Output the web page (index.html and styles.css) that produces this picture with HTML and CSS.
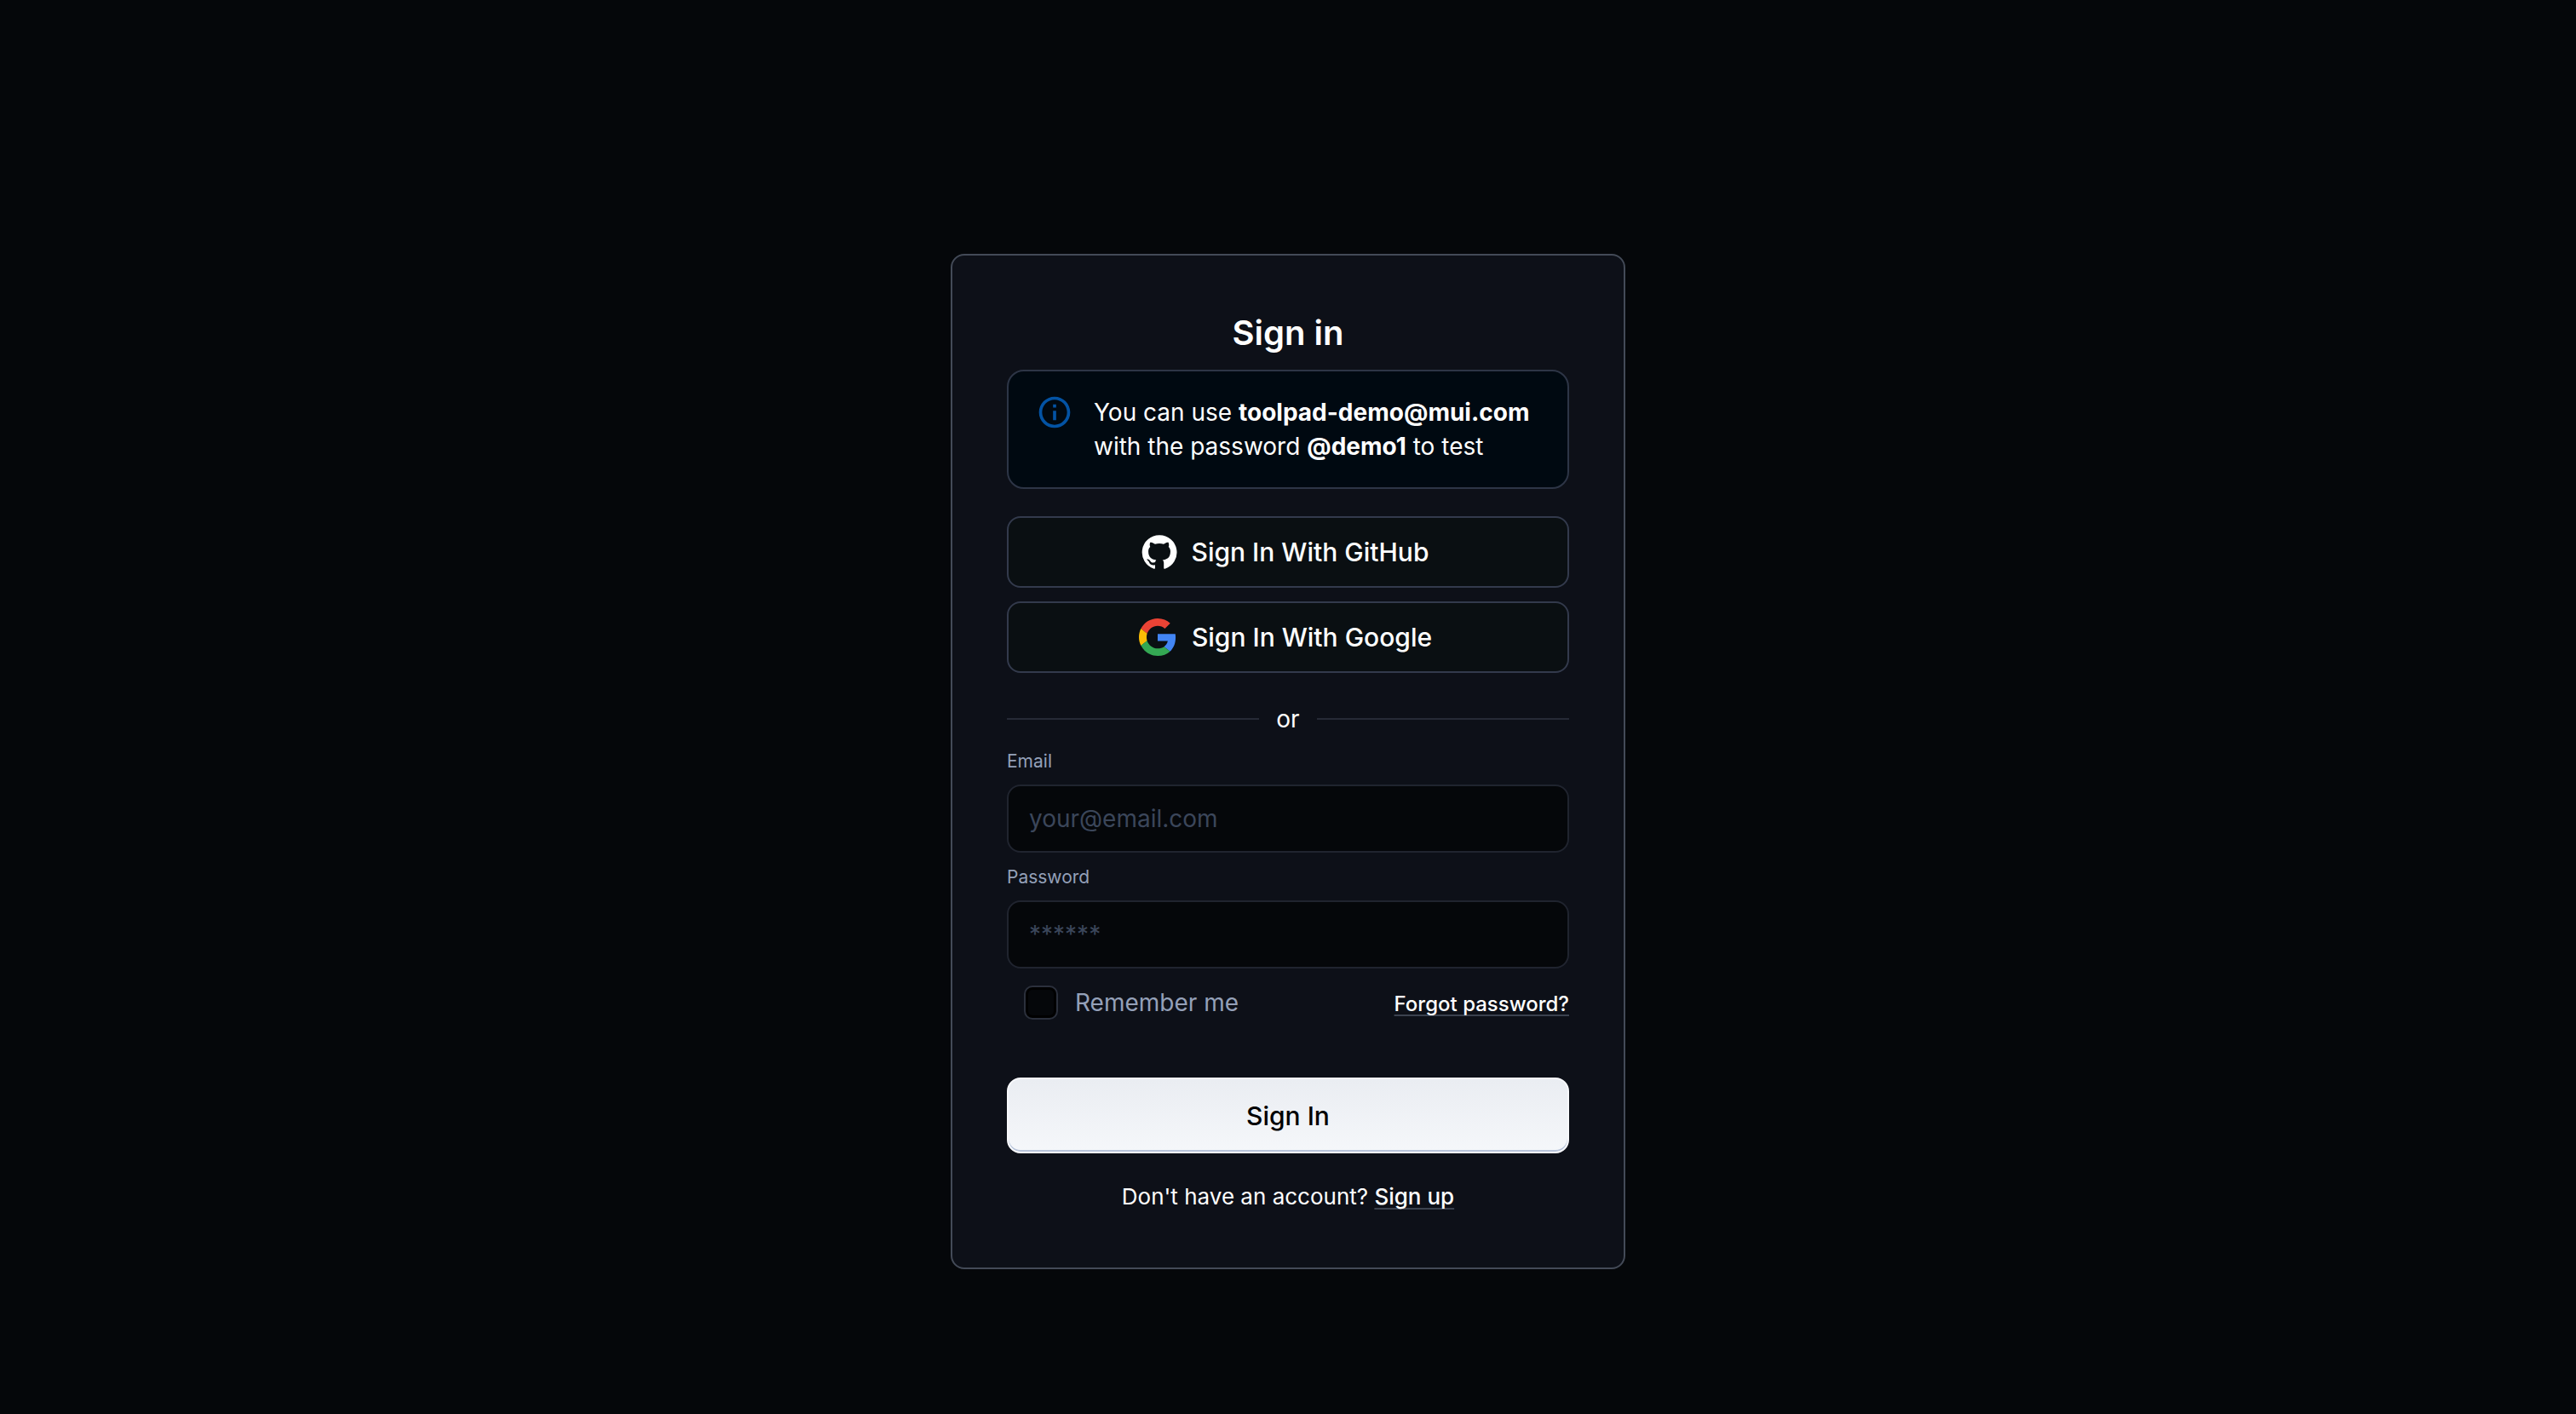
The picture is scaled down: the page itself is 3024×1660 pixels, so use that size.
FILE: index.html
```html
<!DOCTYPE html>
<html lang="en">
<head>
  <meta charset="utf-8">
  <meta name="viewport" content="width=device-width, initial-scale=1">
  <title>Sign in</title>
  <link rel="stylesheet" href="styles.css">
</head>
<body>
  <main class="page">
    <section class="card">
      <h1 class="title">Sign in</h1>

      <div class="alert" role="status">
        <svg class="alert-icon" viewBox="0 0 24 24" aria-hidden="true">
          <path d="M11 7h2v2h-2zm0 4h2v6h-2zm1-9C6.480 2 2 6.480 2 12s4.480 10 10 10 10-4.480 10-10S17.520 2 12 2m0 18c-4.410 0-8-3.590-8-8s3.590-8 8-8 8 3.590 8 8-3.590 8-8 8"/>
        </svg>
        <p class="alert-text">You can use <strong>toolpad-demo@mui.com</strong> with the password <strong>@demo1</strong> to test</p>
      </div>

      <div class="providers">
        <button class="provider" type="button">
          <svg class="provider-icon" viewBox="0 0 24 24" aria-hidden="true">
            <path fill="#fff" d="M12 1.27a11 11 0 00-3.48 21.46c.55.09.73-.28.73-.55v-1.84c-3.03.64-3.67-1.46-3.67-1.46-.55-1.29-1.28-1.65-1.28-1.65-.92-.65.1-.65.1-.65 1.1 0 1.73 1.1 1.73 1.1.92 1.65 2.57 1.2 3.21.92a2 2 0 01.64-1.47c-2.47-.27-5.04-1.19-5.04-5.5 0-1.1.46-2.1 1.2-2.84a3.76 3.76 0 010-2.93s.91-.28 3.11 1.1c1.8-.49 3.7-.49 5.5 0 2.1-1.38 3.02-1.1 3.02-1.1a3.76 3.76 0 01.1 2.93c.83.74 1.2 1.74 1.2 2.94 0 4.21-2.57 5.13-5.04 5.4.45.37.82.92.82 2.02v3.03c0 .27.1.64.73.55A11 11 0 0012 1.27"/>
          </svg>
          Sign In With GitHub
        </button>
        <button class="provider" type="button">
          <svg class="provider-icon provider-icon-wide" viewBox="0 0 48 48" aria-hidden="true">
            <path fill="#ea4335" d="M24 9.5c3.54 0 6.71 1.22 9.21 3.6l6.85-6.85C35.9 2.38 30.47 0 24 0 14.62 0 6.51 5.38 2.56 13.22l7.98 6.190C12.430 13.720 17.740 9.500 24 9.500z"/>
            <path fill="#4285f4" d="M46.980 24.550c0-1.570-.150-3.090-.380-4.550H24v9.020h12.940c-.580 2.960-2.260 5.480-4.780 7.180l7.730 6c4.510-4.180 7.090-10.360 7.090-17.650z"/>
            <path fill="#fbbc05" d="M10.530 28.590c-.480-1.450-.760-2.990-.760-4.590s.270-3.140.760-4.590l-7.980-6.190C.920 16.460 0 20.120 0 24c0 3.880.920 7.540 2.560 10.780l7.970-6.190z"/>
            <path fill="#34a853" d="M24 48c6.480 0 11.930-2.130 15.890-5.810l-7.730-6c-2.150 1.450-4.920 2.300-8.160 2.300-6.260 0-11.570-4.220-13.470-9.910l-7.980 6.190C6.510 42.620 14.620 48 24 48z"/>
          </svg>
          Sign In With Google
        </button>
      </div>

      <div class="divider"><span>or</span></div>

      <form class="form">
        <label class="label" for="email">Email</label>
        <input class="field" id="email" type="email" placeholder="your@email.com">
        <label class="label" for="password">Password</label>
        <input class="field" id="password" type="password" placeholder="******">
        <div class="options">
          <label class="remember"><input class="checkbox" type="checkbox">Remember me</label>
          <a class="link forgot" href="#forgot">Forgot password?</a>
        </div>
        <button class="submit" type="submit">Sign In</button>
      </form>

      <p class="signup">Don't have an account? <a class="link" href="#signup">Sign up</a></p>
    </section>
  </main>
</body>
</html>
```
FILE: styles.css
```css
*,
*::before,
*::after {
  box-sizing: border-box;
}

body {
  margin: 0;
  background: #05070a;
  color: #fff;
  font-family: Inter, "Liberation Sans", sans-serif;
  font-size: 28px;
  line-height: 40px;
}

button,
input {
  font: inherit;
}

.page {
  display: flex;
  justify-content: center;
  min-height: 100vh;
  padding: 298px 32px 170px;
}

.card {
  align-self: flex-start;
  width: 100%;
  max-width: 792px;
  padding: 64px;
  border: 2px solid #434a57;
  border-radius: 16px;
  background: #0d1018;
}

.title {
  margin: 0 0 16px;
  font-size: 40px;
  font-weight: 600;
  line-height: 54px;
  text-align: center;
}

.alert {
  display: flex;
  gap: 24px;
  padding: 28px 32px;
  border: 2px solid #2d3546;
  border-radius: 20px;
  background: #000911;
}

.alert-icon {
  flex: none;
  width: 44px;
  height: 44px;
  margin-top: -2px;
  fill: #0353a4;
}

.alert-text {
  margin: 0;
}

.alert-text strong {
  font-weight: 700;
}

.providers {
  display: grid;
  gap: 16px;
  margin-top: 32px;
}

.provider {
  display: flex;
  align-items: center;
  justify-content: center;
  gap: 16px;
  height: 84px;
  padding: 0 32px;
  border: 2px solid #333a4c;
  border-radius: 16px;
  background: #0a0f12;
  color: #fff;
  font-size: 30px;
  font-weight: 500;
}

.provider-icon {
  flex: none;
  width: 44px;
  height: 44px;
  margin-left: -8px;
}

.provider-icon-wide {
  width: 48px;
}

.divider {
  display: flex;
  align-items: center;
  gap: 20px;
  margin: 34px 0 1px;
}

.divider::before,
.divider::after {
  content: "";
  flex: 1;
  height: 2px;
  background: #262a36;
}

.form {
  display: flex;
  flex-direction: column;
}

.label {
  margin: 13px 0 11px;
  color: #94a0b8;
  font-size: 21px;
  line-height: 32px;
}

.field {
  width: 100%;
  height: 80px;
  padding: 0 24px;
  border: 2px solid #20242f;
  border-radius: 16px;
  outline: 0;
  background: #05070a;
  color: #fff;
}

.field::placeholder {
  color: #3b465a;
  opacity: 1;
}

.options {
  display: flex;
  align-items: last baseline;
  justify-content: space-between;
  padding: 20px 0;
}

.remember {
  display: flex;
  align-items: center;
  gap: 20px;
  padding-left: 20px;
  color: #94a0b8;
}

.checkbox {
  appearance: none;
  width: 40px;
  height: 40px;
  margin: 0;
  border: 2px solid #2b303c;
  border-radius: 10px;
  background: #05070a;
  box-shadow: inset 0 0 0 3px #000;
}

.link {
  color: #fff;
  font-weight: 500;
  text-decoration: underline 2px #3b424f;
  text-decoration-skip-ink: none;
  text-underline-offset: 4px;
}

.forgot {
  font-size: 24px;
  line-height: 32px;
}

.submit {
  height: 89px;
  margin-top: 48px;
  border: 2px solid #f7f8fb;
  border-radius: 16px;
  background: linear-gradient(#eaedf2, #f5f7fa);
  box-shadow: inset 0 -2px 0 #b8c4da;
  color: #000;
  font-size: 30px;
  font-weight: 500;
}

.signup {
  margin: 32px 0 0;
  font-size: 26px;
  line-height: 38px;
  text-align: center;
}
```
